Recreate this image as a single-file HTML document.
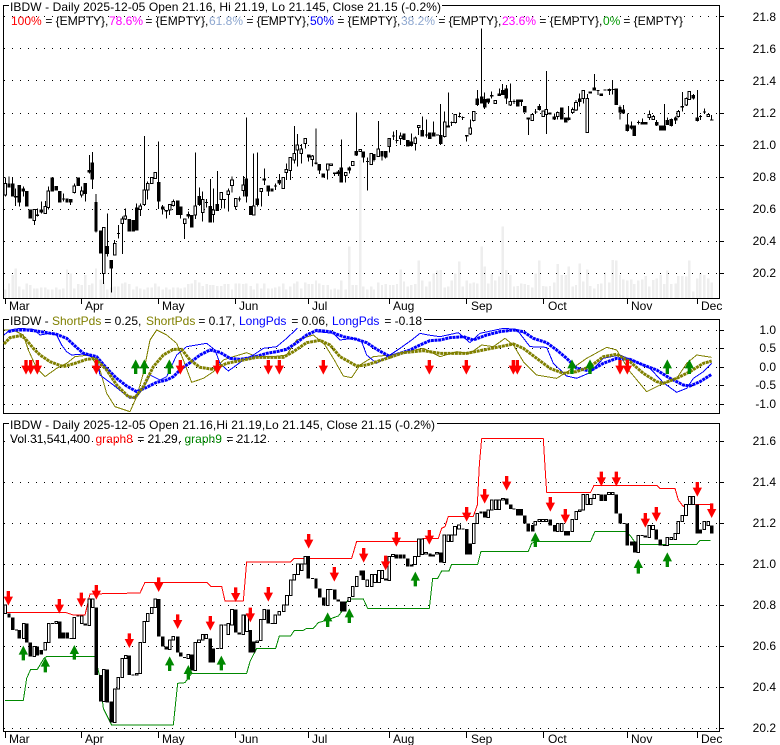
<!DOCTYPE html>
<html><head><meta charset="utf-8"><title>IBDW</title>
<style>
html,body{margin:0;padding:0;background:#fff;width:780px;height:745px;overflow:hidden}
svg{display:block}
text{font-family:"Liberation Sans",Arial,sans-serif;font-size:12px;fill:#000;white-space:pre}
.w{fill:none;stroke:#000;stroke-width:3;shape-rendering:crispEdges}
.f{fill:none;stroke:#000;stroke-width:10;shape-rendering:crispEdges}
.h{fill:#fff;stroke:#000;stroke-width:3;shape-rendering:crispEdges}
.l{fill:none;stroke-width:3;stroke-linejoin:round;shape-rendering:crispEdges}
</style></head><body>
<svg width="780" height="745" viewBox="0 0 780 745" xmlns="http://www.w3.org/2000/svg">
<rect width="780" height="745" fill="#fff"/>
<defs>
<path id="dn" d="M-5 0h10v17h9L0 44-14 17h9z" fill="#f00"/>
<path id="up" d="M0 0L14 27H5V44H-5V27H-14z" fill="#080"/>
</defs>

<!-- volume -->
<g transform="scale(.33333)" fill="none" stroke="#eee" stroke-width="7" shape-rendering="crispEdges">
<path d="M16 894V868M27 894V850M38 894V825M47 894V805M58 894V860M70 894V868M80 894V850M91 894V855M103 894V865M112 894V865M124 894V862M136 894V862M145 894V868M157 894V868M169 894V862M179 894V868M190 894V865M201 894V808M212 894V820M223 894V865M235 894V852M245 894V855M256 894V825M268 894V855M277 894V850M288 894V805M302 894V838M311 894V848M322 894V868M334 894V862M344 894V860M355 894V860M367 894V850M376 894V848M388 894V852M400 894V868M410 894V860M421 894V865M433 894V868M443 894V862M455 894V862M466 894V850M476 894V860M488 894V868M499 894V862M509 894V868M520 894V862M533 894V862M542 894V865M554 894V862M565 894V852M575 894V850M586 894V840M598 894V848M608 894V858M620 894V852M631 894V855M640 894V855M652 894V858M664 894V858M674 894V852M685 894V852M696 894V868M707 894V850M718 894V850M730 894V852M739 894V850M752 894V858M761 894V868M772 894V850M784 894V865M793 894V850M805 894V865M816 894V865M826 894V862M838 894V860M850 894V850M859 894V868M871 894V860M883 894V850M892 894V845M904 894V865M916 894V848M926 894V852M937 894V852M948 894V842M958 894V850M970 894V855M983 894V855M993 894V868M1004 894V865M1015 894V868M1024 894V842M1037 894V868M1048 894V740M1058 894V855M1069 894V855M1081 894V480M1090 894V860M1102 894V868M1114 894V860M1122 894V868M1135 894V848M1146 894V855M1157 894V852"/>
<path transform="translate(1170)" d="M0 894V855M10 894V855M21 894V852M32 894V808M42 894V845M53 894V860M64 894V855M76 894V852M86 894V782M97 894V842M109 894V860M119 894V845M131 894V820M142 894V812M152 894V810M164 894V862M175 894V860M185 894V842M196 894V820M208 894V785M218 894V860M230 894V842M241 894V850M251 894V848M262 894V850M275 894V740M284 894V800M295 894V850M305 894V822M316 894V842M328 894V830M338 894V680M349 894V810M361 894V825M372 894V860M383 894V858M394 894V850M404 894V852M415 894V855M427 894V862M437 894V820M448 894V782M460 894V858M469 894V860M480 894V858M493 894V848M503 894V792M515 894V825M527 894V825M536 894V800M548 894V860M558 894V855M569 894V790M580 894V845M592 894V808M601 894V858M613 894V865M624 894V852M634 894V850M645 894V818M658 894V848M668 894V780M679 894V782M690 894V825M700 894V838M712 894V842M724 894V838M733 894V852M745 894V842M757 894V838M767 894V828M778 894V860M790 894V840M800 894V835M812 894V825M823 894V852M832 894V812M844 894V852M857 894V850M865 894V828M877 894V828M889 894V830M898 894V782M910 894V875M922 894V835M931 894V820M943 894V825M955 894V835M965 894V848"/>
</g>

<!-- grids -->
<path d="M4 16.5H720M4 48.5H720M4 80.5H720M4 113.5H720M4 145.5H720M4 177.5H720M4 209.5H720M4 241.5H720M4 273.5H720M4 330.5H720M4 348.5H720M4 367.5H720M4 385.5H720M4 404.5H720M4 441.5H720M4 482.5H720M4 523.5H720M4 564.5H720M4 605.5H720M4 646.5H720M4 687.5H720M4 728.5H720" stroke="#000" stroke-width="1" stroke-dasharray="1 7" fill="none"/>

<!-- panel frames -->
<g stroke="#000" stroke-width="1" fill="none" shape-rendering="crispEdges">
<path d="M9 5.5H3.5V298.5H719.5V5.5H442"/>
<path d="M9 319.5H3.5V413.5H719.5V319.5H424"/>
<path d="M9 423.5H3.5V731.5H719.5V423.5H437"/>
<path d="M720 16.5h4M720 48.5h4M720 80.5h4M720 113.5h4M720 145.5h4M720 177.5h4M720 209.5h4M720 241.5h4M720 273.5h4M720 330.5h4M720 348.5h4M720 367.5h4M720 385.5h4M720 404.5h4M720 441.5h4M720 482.5h4M720 523.5h4M720 564.5h4M720 605.5h4M720 646.5h4M720 687.5h4M720 728.5h4"/>
<path d="M5.5 298V304M81.5 298V304M158.5 298V304M235.5 298V304M308.5 298V304M389.5 298V304M466.5 298V304M543.5 298V304M627.5 298V304M697.5 298V304"/>
<path d="M5.5 731V738M81.5 731V738M158.5 731V738M235.5 731V738M308.5 731V738M389.5 731V738M466.5 731V738M543.5 731V738M627.5 731V738M697.5 731V738"/>
</g>

<!-- panel 1 candles -->
<g transform="scale(.33333)">
<path class="w" d="M16 533V590M27 530V562M38 533V590M47 565V618M58 555V620M70 560V590M80 573V620M91 628V655M103 628V675M112 625V650M124 605V640M136 603V640M145 560V628M190 580V605M212 597V615M223 550V580M245 560V592M256 549V605M268 465V520M277 456V567M288 582V698M302 692V760M311 682V852M322 640V770M334 780V878M344 720V765M355 675V715M367 650V762M376 625V660M410 610V692M421 610V648M433 408V618M443 545V598M476 425V627M488 615V643M499 630V655M509 612V645M520 598V620M542 620V655M554 657V717M565 635V655M586 457V657M598 563V618M608 575V665M620 597V622M631 537V668M640 565V668M652 513V633M664 578V625M674 598V625M685 565V635M696 530V578M707 596V628M718 590V605M730 528V590M739 352V607M761 460V645M772 457V620M784 565V620M793 505V555M805 557V588M826 550V570M838 522V555M859 490V540M871 472V540M883 378V490M892 402V500M904 432V490M916 415V445M926 463V485M937 465V500M948 385V493M958 492V522M983 490V538M1004 517V528M1015 510V528M1024 418V548M1037 518V547M1048 500V520M1069 337V468M1090 455V487M1102 472V572M1122 462V485M1135 363V470M1146 453V482M1157 453V475M1168 415V458M186 597h9M351 700h9M615 607h9M669 598h9M714 597h9M822 558h9M1098 485h9"/>
<path class="f" d="M27 550V562M38 550V590M47 588V592M58 555V608M70 565V575M80 573V620M91 628V655M112 643V648M124 628V638M157 533V575M169 558V572M179 573V608M201 596V608M212 597V608M235 533V558M256 549V582M268 510V518M277 487V538M288 606V695M302 692V760M322 738V762M334 780V806M388 657V695M400 660V695M410 622V692M476 546V605M488 620V628M499 630V634M533 602V645M542 620V645M565 642V650M575 645V683M598 588V615M631 618V668M652 612V633M739 535V590M752 618V645M772 595V615M793 535V542M805 557V575M816 565V575M838 540V550M926 463V472M948 487V492M958 492V512M970 520V533M1004 517V522M1015 515V522M1024 502V548M1048 502V512M1069 453V467M1090 455V473M1122 462V480M1146 453V470M1157 453V472"/>
<path class="h" d="M12 550h8V585h-8zM99 628h8V662h-8zM132 620h8V640h-8zM141 573h8V623h-8zM219 558h8V577h-8zM241 573h8V585h-8zM307 682h8V820h-8zM340 730h8V765h-8zM363 657h8V670h-8zM372 648h8V657h-8zM417 618h8V628h-8zM429 570h8V613h-8zM439 550h8V570h-8zM451 533h8V550h-8zM462 517h8V535h-8zM505 613h8V630h-8zM516 605h8V617h-8zM550 657h8V670h-8zM582 618h8V645h-8zM604 598h8V637h-8zM636 630h8V643h-8zM660 578h8V598h-8zM681 573h8V583h-8zM692 540h8V557h-8zM703 596h8V620h-8zM726 555h8V572h-8zM757 618h8V645h-8zM780 565h8V575h-8zM846 532h8V565h-8zM855 508h8V518h-8zM867 472h8V512h-8zM879 460h8V480h-8zM888 435h8V450h-8zM900 447h8V460h-8zM912 415h8V430h-8zM933 468h8V478h-8zM979 492h8V510h-8zM989 492h8V496h-8zM1033 518h8V527h-8zM1054 485h8V496h-8zM1077 449h8V455h-8zM1110 460h8V493h-8zM1131 447h8V470h-8zM1164 415h8V440h-8z"/>
<g transform="translate(1170)">
<path class="w" d="M0 415V440M10 395V420M20 390V430M32 398V435M64 400V440M76 410V452M86 377V405M97 350V410M109 358V412M131 365V410M152 312V435M164 335V412M175 277V383M185 365V378M196 343V370M208 337V352M218 350V360M230 405V425M241 358V405M251 335V365M262 270V318M275 85V311M284 277V327M295 296V312M305 275V295M328 265V288M338 252V285M349 255V312M361 250V318M372 298V312M394 298V318M415 352V405M437 327V342M448 312V332M469 213V402M493 340V360M503 335V358M536 318V362M548 322V342M558 300V333M569 280V320M580 272V310M592 282V398M613 222V272M624 270V285M658 265V285M668 240V283M690 317V358M700 315V342M712 340V395M724 365V388M745 362V373M757 355V373M778 332V360M790 345V360M800 360V378M823 312V392M832 352V375M844 355V380M857 350V372M865 330V352M877 276V335M889 292V318M910 282V298M922 270V365M931 345V360M943 325V342M965 345V362M6 408h9M16 422h9M105 405h9M138 405h9M181 368h9M204 350h9M214 352h9M368 305h9M433 336h9M620 272h9M641 270h9M664 268h9M741 368h9M927 350h9M939 336h9"/>
<path class="f" d="M42 400V420M53 420V440M64 424V438M97 390V410M119 397V417M131 398V410M152 405V432M175 376V383M230 405V410M262 295V315M275 289V311M284 297V323M295 296V307M305 285V290M328 280V288M338 270V285M349 265V295M383 298V320M394 298V306M404 318V338M415 352V358M448 318V330M480 337V344M493 350V359M515 322V359M527 352V368M536 352V360M569 295V306M601 275V280M613 262V272M634 280V288M679 265V315M690 321V338M700 328V340M712 373V393M724 376V386M733 376V408M757 366V373M767 366V373M800 366V377M812 376V392M823 376V392M832 360V375M844 357V378M857 352V362M877 318V322M910 285V295M922 352V363M965 358V362"/>
<path class="h" d="M28 408h8V416h-8zM72 414h8V430h-8zM82 377h8V383h-8zM160 366h8V410h-8zM192 343h8V368h-8zM237 384h8V402h-8zM247 335h8V362h-8zM312 302h8V310h-8zM357 305h8V315h-8zM423 344h8V361h-8zM456 333h8V349h-8zM465 328h8V344h-8zM499 338h8V350h-8zM544 328h8V338h-8zM554 307h8V330h-8zM576 272h8V296h-8zM588 295h8V398h-8zM654 268h8V272h-8zM774 344h8V352h-8zM786 350h8V358h-8zM861 335h8V350h-8zM885 295h8V315h-8zM894 274h8V298h-8zM951 344h8V350h-8z"/>
</g>
</g>

<!-- panel 2 lines -->
<g transform="scale(.33333)">
<g transform="translate(0,900)">
<polyline class="l" stroke="#808000" points="12,90 40,90 70,105 85,150 110,205 135,230 170,205 200,190 225,170 270,165 300,210 320,280 345,320 390,335 410,290 430,220 450,120 470,90 500,105 530,130 550,180 575,247 610,235 640,215 670,180 700,170 740,158 770,170 820,170 860,165 890,120 940,105 975,135 1000,175 1030,228 1055,233 1080,195 1120,170 1170,165"/>
<polyline class="l" stroke="#00f" points="12,105 30,90 60,85 100,88 120,105 150,100 170,105 185,135 200,155 215,165 250,162 290,175 300,225 340,255 390,295 410,290 430,265 450,225 480,240 500,230 530,165 560,140 590,135 620,130 645,150 660,190 685,213 710,195 730,180 760,165 790,145 830,140 860,115 892,85"/>
<polyline class="l" stroke="#00f" points="950,95 1000,100 1020,120 1060,115 1085,125 1100,165 1130,190 1170,165"/>
<polyline fill="none" stroke="#00f" stroke-width="9" stroke-dasharray="9 2" points="25,95 45,90 80,90 110,93 140,98 170,103 200,115 225,138 250,160 290,170 320,205 350,235 380,258 410,275 440,262 470,247 500,240 520,230 545,205 570,188 600,165 630,150 660,157 690,175 720,178 760,172 800,160 830,155 860,148 890,128 920,105 950,91 990,95 1030,110 1070,118 1100,128 1130,148 1170,170"/>
<polyline fill="none" stroke="#808000" stroke-width="9" stroke-dasharray="9 2" points="12,132 30,113 60,107 75,115 100,145 120,165 150,185 190,200 225,190 260,178 285,175 320,210 350,255 385,290 405,293 430,260 460,200 490,165 520,148 545,148 570,180 600,202 640,208 680,190 720,182 770,172 850,172 880,155 920,128 960,121 990,135 1020,170 1070,198 1100,195 1130,185 1170,172"/>
<use href="#dn" x="78" y="180"/><use href="#dn" x="92" y="180"/><use href="#dn" x="112" y="180"/><use href="#dn" x="289" y="180"/><use href="#dn" x="541" y="180"/><use href="#dn" x="652" y="180"/><use href="#dn" x="805" y="180"/><use href="#dn" x="838" y="180"/><use href="#dn" x="970" y="180"/>
<use href="#up" x="407" y="178"/><use href="#up" x="433" y="178"/><use href="#up" x="508" y="178"/>
</g>
<g transform="translate(1170,900)">
<polyline class="l" stroke="#808000" points="0,165 50,155 100,145 150,170 200,155 240,160 275,135 310,140 345,115 370,135 400,185 440,225 500,235 540,210 590,175 650,142 680,150 720,215 770,275 810,255 860,235 890,190 920,165 965,172"/>
<polyline class="l" stroke="#00f" points="0,165 30,145 65,120 90,100 115,105 150,110 205,98 240,128 270,100 340,85 380,88 420,140 470,142 490,190 530,228 560,235 600,218 640,175 690,165 720,178 780,205 820,248 860,277 890,265 910,235 940,215 965,190"/>
<polyline fill="none" stroke="#00f" stroke-width="9" stroke-dasharray="9 2" points="0,170 30,160 60,150 90,135 120,122 150,120 180,113 220,110 250,120 290,105 330,95 370,90 400,95 430,115 470,128 500,150 530,175 560,205 600,213 640,190 680,175 720,178 760,195 800,210 840,235 880,255 900,258 930,245 965,223"/>
<polyline fill="none" stroke="#808000" stroke-width="9" stroke-dasharray="9 2" points="0,172 40,158 100,152 150,160 230,160 280,150 330,140 370,132 400,145 440,175 480,205 520,220 560,215 600,200 640,170 680,163 720,185 760,220 800,245 820,250 860,235 900,215 940,190 965,183"/>
<use href="#dn" x="118" y="180"/><use href="#dn" x="229" y="180"/><use href="#dn" x="370" y="180"/><use href="#dn" x="382" y="180"/><use href="#dn" x="690" y="180"/><use href="#dn" x="712" y="180"/>
<use href="#up" x="546" y="178"/><use href="#up" x="600" y="178"/><use href="#up" x="832" y="178"/><use href="#up" x="898" y="178"/>
</g>
</g>

<!-- panel 3 -->
<g transform="scale(.33333) translate(0,1245)">
<polyline class="l" stroke="#f00" points="12,592 195,592 220,600 255,600 270,537 420,534 435,502 620,502 632,514 665,514 675,558 730,558 740,441 872,441 882,430 1055,430 1070,379 1260,379 1270,370 1315,370 1325,340 1335,335 1345,304 1420,304 1432,270 1438,150 1445,71 1630,71 1635,155 1640,232 1772,232 1782,211 1970,211 1980,220 2025,220 2035,255 2050,275 2060,268 2135,268"/>
<polyline class="l" stroke="#080" points="15,856 70,856 80,790 92,763 112,763 132,730 140,724 285,724 298,780 310,880 335,930 520,930 533,805 555,803 575,775 740,775 750,740 770,700 827,700 838,663 872,663 883,646 910,646 920,640 940,640 955,623 975,617 1015,603 1025,590 1045,552 1090,552 1103,580 1288,580 1298,490 1313,490 1325,468 1347,468 1355,448 1433,448 1443,409 1585,409 1595,385 1610,379 1772,379 1785,349 1875,349 1890,361 1900,375 1910,388 2090,388 2100,376 2132,376"/>
<path class="f" d="M27 596V608M38 608V645M58 645V670M80 625V683M91 683V725M112 695V722M124 705V718M179 620V670M190 652V670M202 652V670M256 625V632M289 577V780M302 780V860M322 763V862M334 860V922M388 722V780M476 552V665M488 665V695M499 695V703M533 665V712M542 712V725M575 718V767M631 670V742M640 700V742M707 583V652M718 652V658M751 645V712M761 680V712"/>
<path class="w" d="M45 645h9M153 625h9M209 670h9M230 603h9M394 780h9M549 728h9M648 700h9M670 630h9"/>
<path class="h" d="M12 570h8V596h-8zM67 625h8V670h-8zM99 695h8V725h-8zM132 683h8V705h-8zM142 625h8V683h-8zM165 620h8V625h-8zM219 608h8V670h-8zM241 603h8V625h-8zM264 552h8V632h-8zM274 552h8V578h-8zM307 763h8V860h-8zM340 822h8V922h-8zM351 787h8V822h-8zM363 730h8V787h-8zM373 722h8V730h-8zM406 775h8V780h-8zM417 682h8V775h-8zM429 620h8V682h-8zM439 595h8V620h-8zM451 577h8V595h-8zM462 552h8V577h-8zM505 675h8V703h-8zM516 665h8V675h-8zM561 718h8V730h-8zM582 682h8V767h-8zM593 675h8V682h-8zM604 658h8V675h-8zM615 658h8V670h-8zM660 630h8V700h-8zM681 625h8V658h-8zM692 583h8V630h-8zM726 600h8V658h-8zM737 600h8V650h-8zM768 678h8V682h-8z"/>
<use href="#dn" x="25" y="528"/><use href="#dn" x="178" y="552"/><use href="#dn" x="244" y="533"/><use href="#dn" x="289" y="510"/><use href="#dn" x="388" y="655"/><use href="#dn" x="476" y="487"/><use href="#dn" x="533" y="598"/><use href="#dn" x="631" y="603"/><use href="#dn" x="707" y="517"/><use href="#dn" x="751" y="578"/>
<use href="#up" x="70" y="692"/><use href="#up" x="136" y="728"/><use href="#up" x="223" y="690"/><use href="#up" x="509" y="724"/><use href="#up" x="565" y="750"/><use href="#up" x="664" y="722"/>
<g transform="translate(780)">
<path class="f" d="M25 583V625M145 423V490M168 490V520M179 520V547M191 547V571M224 523V553M235 553V560M245 560V590M255 560V590M303 466V482M310 466V495M377 490V497M409 418V430M421 418V430M432 418V430M443 430V455M455 448V455M510 415V425M520 418V425M542 412V443M620 342V418M631 385V418M663 290V295M674 290V308M740 250V268M752 268V282M773 282V302"/>
<path class="w" d="M32 625h9M153 490h9M209 523h9M604 342h9M758 282h9"/>
<path class="h" d="M-2 613h8V677h-8zM9 583h8V613h-8zM42 600h8V625h-8zM54 590h8V600h-8zM67 570h8V590h-8zM77 541h8V570h-8zM88 495h8V541h-8zM99 478h8V495h-8zM110 447h8V478h-8zM121 447h8V467h-8zM132 425h8V447h-8zM199 523h8V571h-8zM264 547h8V560h-8zM274 515h8V545h-8zM286 484h8V515h-8zM318 495h8V515h-8zM331 478h8V515h-8zM341 478h8V502h-8zM353 466h8V502h-8zM363 466h8V490h-8zM384 425h8V497h-8zM395 418h8V425h-8zM461 425h8V448h-8zM472 372h8V425h-8zM483 372h8V418h-8zM494 412h8V417h-8zM527 412h8V417h-8zM549 360h8V443h-8zM561 360h8V380h-8zM571 360h8V380h-8zM581 335h8V360h-8zM593 330h8V342h-8zM637 325h8V385h-8zM648 295h8V325h-8zM681 285h8V308h-8zM691 255h8V285h-8zM703 255h8V283h-8zM714 255h8V283h-8zM725 250h8V255h-8z"/>
<use href="#dn" x="25" y="516"/><use href="#dn" x="146" y="357"/><use href="#dn" x="223" y="456"/><use href="#dn" x="311" y="399"/><use href="#dn" x="377" y="422"/><use href="#dn" x="409" y="351"/><use href="#dn" x="508" y="345"/><use href="#dn" x="620" y="276"/><use href="#dn" x="674" y="222"/><use href="#dn" x="740" y="183"/>
<use href="#up" x="203" y="592"/><use href="#up" x="268" y="580"/><use href="#up" x="466" y="470"/>
</g>
<g transform="translate(1560)">
<path class="f" d="M4 282V302M14 302V326M25 326V350M38 330V350M91 314V332M104 330V350M137 348V362M145 348V362M244 238V258M256 238V258M289 238V296M301 296V325M322 325V392M335 380V392M344 380V412M376 362V368M409 344V374M421 374V392M532 268V355M541 344V355M575 332V356"/>
<path class="w" d="M229 238h9M307 325h9M361 362h9M428 392h9"/>
<path class="h" d="M42 320h8V330h-8zM54 314h8V320h-8zM65 314h8V320h-8zM75 314h8V320h-8zM109 325h8V350h-8zM121 325h8V350h-8zM153 314h8V350h-8zM165 290h8V314h-8zM175 285h8V290h-8zM186 238h8V285h-8zM198 238h8V268h-8zM208 250h8V268h-8zM219 238h8V250h-8zM263 232h8V238h-8zM274 232h8V238h-8zM351 362h8V412h-8zM384 332h8V368h-8zM395 332h8V344h-8zM438 368h8V392h-8zM450 368h8V374h-8zM462 355h8V374h-8zM471 320h8V355h-8zM483 302h8V320h-8zM494 268h8V302h-8zM505 245h8V268h-8zM516 245h8V268h-8zM549 320h8V344h-8zM561 320h8V332h-8z"/>
<use href="#dn" x="91" y="246"/><use href="#dn" x="136" y="282"/><use href="#dn" x="244" y="170"/><use href="#dn" x="289" y="170"/><use href="#dn" x="376" y="294"/><use href="#dn" x="409" y="276"/><use href="#dn" x="532" y="201"/><use href="#dn" x="575" y="265"/>
<use href="#up" x="46" y="352"/><use href="#up" x="355" y="432"/><use href="#up" x="442" y="412"/>
</g>
</g>

<!-- titles -->
<text x="10" y="11" textLength="431" lengthAdjust="spacing">IBDW - Daily 2025-12-05 Open 21.16, Hi 21.19, Lo 21.145, Close 21.15 (-0.2%)</text>
<text x="11" y="25" style="fill:#f00">100%</text><text x="42" y="25"> = {EMPTY},</text>
<text x="109" y="25" style="fill:#f0f">78.6%</text><text x="142" y="25"> = {EMPTY},</text>
<text x="209" y="25" style="fill:#8fa8d0">61.8%</text><text x="243" y="25"> = {EMPTY},</text>
<text x="310" y="25" style="fill:#00f">50%</text><text x="334" y="25"> = {EMPTY},</text>
<text x="401" y="25" style="fill:#8fa8d0">38.2%</text><text x="435" y="25"> = {EMPTY},</text>
<text x="502" y="25" style="fill:#f0f">23.6%</text><text x="536" y="25"> = {EMPTY},</text>
<text x="603" y="25" style="fill:#090">0%</text><text x="620" y="25"> = {EMPTY}</text>

<text x="10" y="325">IBDW -</text>
<text x="52" y="325" style="fill:#808000">ShortPds</text><text x="101" y="325"> = 0.25,</text>
<text x="146" y="325" style="fill:#808000">ShortPds</text><text x="195" y="325"> = 0.17,</text>
<text x="239" y="325" style="fill:#00f">LongPds</text><text x="288" y="325"> = 0.06,</text>
<text x="332" y="325" style="fill:#00f">LongPds</text><text x="381" y="325"> = -0.18</text>

<text x="10" y="429" textLength="425" lengthAdjust="spacing">IBDW - Daily 2025-12-05 Open 21.16,Hi 21.19,Lo 21.145, Close 21.15 (-0.2%)</text>
<text x="10" y="443">Vol 31,541,400</text>
<text x="95.5" y="443" style="fill:#f00">graph8</text><text x="134" y="443"> = 21.29,</text>
<text x="184.5" y="443" style="fill:#080">graph9</text><text x="223" y="443"> = 21.12</text>

<!-- months -->
<g>
<text x="9" y="310">Mar</text><text x="85" y="310">Apr</text><text x="162" y="310">May</text><text x="239" y="310">Jun</text><text x="312" y="310">Jul</text><text x="393" y="310">Aug</text><text x="471" y="310">Sep</text><text x="548" y="310">Oct</text><text x="631" y="310">Nov</text><text x="701" y="310">Dec</text>
<text x="9" y="743">Mar</text><text x="85" y="743">Apr</text><text x="162" y="743">May</text><text x="239" y="743">Jun</text><text x="312" y="743">Jul</text><text x="393" y="743">Aug</text><text x="471" y="743">Sep</text><text x="548" y="743">Oct</text><text x="631" y="743">Nov</text><text x="701" y="743">Dec</text>
</g>

<!-- y labels -->
<g text-anchor="end">
<text x="776" y="21">21.8</text><text x="776" y="53">21.6</text><text x="776" y="85">21.4</text><text x="776" y="117">21.2</text><text x="776" y="149">21.0</text><text x="776" y="181">20.8</text><text x="776" y="213">20.6</text><text x="776" y="245">20.4</text><text x="776" y="277">20.2</text>
<text x="776" y="334">1.0</text><text x="776" y="352">0.5</text><text x="776" y="371">0.0</text><text x="776" y="389">-0.5</text><text x="776" y="408">-1.0</text>
<text x="776" y="445">21.6</text><text x="776" y="486">21.4</text><text x="776" y="527">21.2</text><text x="776" y="568">21.0</text><text x="776" y="609">20.8</text><text x="776" y="650">20.6</text><text x="776" y="691">20.4</text><text x="776" y="732">20.2</text>
</g>
</svg>
</body></html>
